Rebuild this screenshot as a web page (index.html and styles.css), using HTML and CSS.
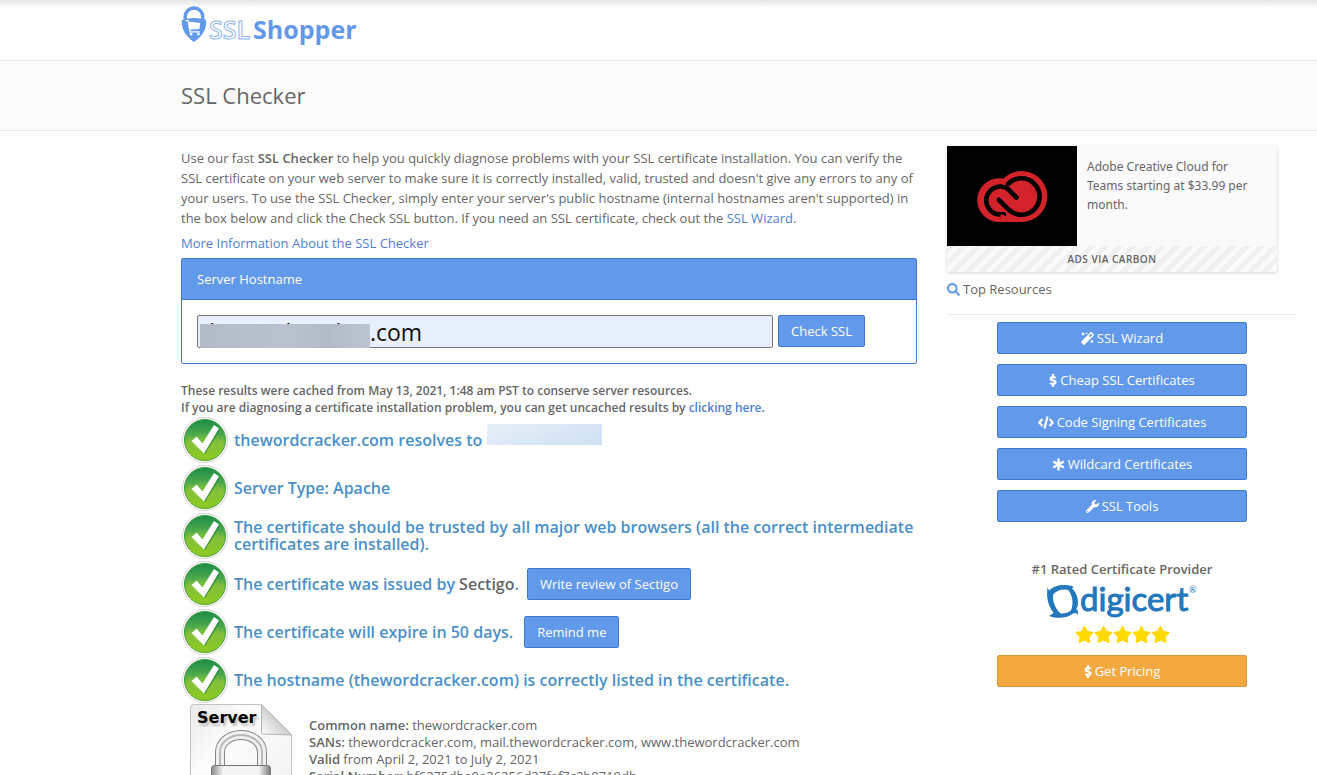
FILE: index.html
```html
<!DOCTYPE html>
<html lang="en">
<head>
<meta charset="utf-8">
<title>SSL Checker</title>
<link rel="stylesheet" href="styles.css">
</head>
<body>
<svg class="defs" aria-hidden="true">
  <defs>
    <linearGradient id="g-ball" x1="0" y1="0" x2="0" y2="1">
      <stop offset="0" stop-color="#1c8a45"/><stop offset=".35" stop-color="#4aa84e"/><stop offset=".55" stop-color="#7cbb35"/><stop offset="1" stop-color="#86c81c"/>
    </linearGradient>
    <linearGradient id="g-page" x1="0" y1="0" x2="1" y2="1">
      <stop offset="0" stop-color="#e9e9e9"/><stop offset=".3" stop-color="#fcfcfc"/><stop offset="1" stop-color="#f1f1f1"/>
    </linearGradient>
    <linearGradient id="g-fold" x1="0" y1="1" x2="1" y2="0">
      <stop offset="0" stop-color="#ffffff"/><stop offset=".5" stop-color="#cfcfcf"/><stop offset="1" stop-color="#f2f2f2"/>
    </linearGradient>
    <linearGradient id="g-lock" x1="0" y1="0" x2="1" y2="0">
      <stop offset="0" stop-color="#8a8a8a"/><stop offset=".2" stop-color="#f4f4f4"/><stop offset=".8" stop-color="#f4f4f4"/><stop offset="1" stop-color="#777"/>
    </linearGradient>
    <symbol id="tick" viewBox="0 0 48 48">
      <circle cx="24" cy="24" r="22.500" fill="#fff" stroke="#d2d2d2"/>
      <circle cx="24" cy="24" r="20.500" fill="url(#g-ball)" stroke="#3f9a3c"/>
      <path d="M4.500 26C10 20 18 18 24 18s14 2 19.500 8A19.500 19.500 0 0 1 4.500 26z" fill="#b5dc4a" opacity=".15"/>
      <path d="M12 25l5-4 5 7L33 10l6 4-15 24z" fill="#237a35" opacity=".7"/>
      <path d="M10.500 25l5.500-4.500 5.500 7L33 9l5 3.500-15 25z" fill="#fff"/>
    </symbol>
    <symbol id="star" viewBox="0 0 576 512"><path d="M259.300 17.800L194 150.200 47.900 171.500c-26.200 3.800-36.700 36.100-17.700 54.600l105.700 103-25 145.500c-4.500 26.300 23.200 46 46.400 33.700L288 439.600l130.700 68.700c23.200 12.200 50.900-7.400 46.400-33.700l-25-145.500 105.700-103c19-18.500 8.500-50.800-17.700-54.600L382 150.200 316.700 17.800c-11.700-23.600-45.600-23.900-57.400 0z"/></symbol>
    <symbol id="dollar" viewBox="0 0 288 512"><path d="M244 158c-18-24-54-36-96-36-54 0-96 22-96 62 0 44 40 56 92 68 54 13 98 28 98 74 0 42-42 66-98 66-46 0-82-14-106-44M144 0v122M144 390v122" fill="none" stroke="currentColor" stroke-width="88"/></symbol>
  </defs>
</svg>

<header class="topbar">
  <a class="logo" href="#" aria-label="SSL Shopper">
    <svg class="logo-mark" viewBox="0 0 26 38" aria-hidden="true">
      <path d="M4 14V11a9 9 0 0 1 18 0v3" fill="none" stroke="#6399ea" stroke-width="3.500"/>
      <path d="M.5 14.500Q13 10 25.500 14.500C26 24 22 31 13 37 4 31 0 24 .5 14.500z" fill="#6399ea"/>
      <path d="M4.500 15h2.500l2 11.500h10" fill="none" stroke="#fff" stroke-width="1.200"/>
      <path d="M7 16l12.500 1.500-1 6-10.500.8z" fill="#fff"/>
      <circle cx="10" cy="28.800" r="1.400" fill="#fff"/><circle cx="17.500" cy="28.800" r="1.400" fill="#fff"/>
    </svg>
    <span class="logo-ssl">SSL</span><span class="logo-shopper">Shopper</span>
  </a>
</header>

<div class="titlebar"><h1>SSL Checker</h1></div>

<div class="layout">
  <main class="main">
    <p class="intro">Use our fast <b>SSL Checker</b> to help you quickly diagnose problems with your SSL certificate installation. You can verify the SSL certificate on your web server to make sure it is correctly installed, valid, trusted and doesn't give any errors to any of your users. To use the SSL Checker, simply enter your server's public hostname (internal hostnames aren't supported) in the box below and click the Check SSL button. If you need an SSL certificate, check out the <a href="#">SSL Wizard</a>.</p>
    <p class="more"><a href="#">More Information About the SSL Checker</a></p>

    <form class="panel">
      <label class="panel-head" for="host">Server Hostname</label>
      <div class="panel-body">
        <div class="host-field">
          <input id="host" type="text" value="thewordcracker.com">
          <span class="mask"></span>
        </div>
        <button class="btn" type="button">Check SSL</button>
      </div>
    </form>

    <p class="cached">These results were cached from May 13, 2021, 1:48 am PST to conserve server resources.<br>If you are diagnosing a certificate installation problem, you can get uncached results by <a href="#">clicking here</a>.</p>

    <ul class="results">
      <li><svg class="tick"><use href="#tick"/></svg><span>thewordcracker.com resolves to</span><span class="ip-mask"></span></li>
      <li><svg class="tick"><use href="#tick"/></svg><span>Server Type: Apache</span></li>
      <li><svg class="tick"><use href="#tick"/></svg><span>The certificate should be trusted by all major web browsers (all the correct intermediate certificates are installed).</span></li>
      <li><svg class="tick"><use href="#tick"/></svg><span>The certificate was issued by <em>Sectigo</em>.</span><button class="btn row-btn" type="button">Write review of Sectigo</button></li>
      <li><svg class="tick"><use href="#tick"/></svg><span>The certificate will expire in 50 days.</span><button class="btn row-btn remind" type="button">Remind me</button></li>
      <li><svg class="tick"><use href="#tick"/></svg><span>The hostname (thewordcracker.com) is correctly listed in the certificate.</span></li>
    </ul>

    <section class="cert">
      <svg class="cert-pic" viewBox="0 0 108 128" role="img" aria-label="Server">
        <path d="M4.500.5h68l30 30v96h-101V3.500q0-3 3-3z" fill="url(#g-page)" stroke="#c4c4c4"/>
        <path d="M72.500.5v28q0 1 1 1.500l29 1z" fill="url(#g-fold)" stroke="#b5b5b5"/>
        <path d="M31 66V48a21 17 0 0 1 42 0v18" fill="none" stroke="#858585" stroke-width="10"/>
        <path d="M31 66V48a21 17 0 0 1 42 0v18" fill="none" stroke="#f0f0f0" stroke-width="8"/>
        <path d="M31 66V48a21 17 0 0 1 42 0v18" fill="none" stroke="#b9b9b9" stroke-width="2"/>
        <rect x="22.500" y="61.500" width="59" height="50" rx="3" fill="url(#g-lock)" stroke="#777"/>
        <text class="cert-shadow" x="10" y="22">Server</text>
        <text class="cert-label" x="8" y="19">Server</text>
      </svg>
      <p><b>Common name:</b> thewordcracker.com<br><b>SANs:</b> thewordcracker.com, mail.thewordcracker.com, www.thewordcracker.com<br><b>Valid</b> from April 2, 2021 to July 2, 2021<br><b>Serial Number:</b> bf6275dba0a26256d27fef7c2b8710db</p>
    </section>
  </main>

  <aside class="side">
    <div class="ad">
      <div class="ad-top">
        <div class="ad-pic">
          <svg class="cc" viewBox="110 88 212 160" aria-hidden="true">
            <path d="M176 245a66 66 0 0 1-1-132q8 0 14 1A77 77 0 1 1 243 245z" fill="#d2232a"/>
            <g fill="none" stroke="#000" stroke-width="14" stroke-linecap="round">
              <path d="M228 171l-26-26A42 42 0 1 0 176 222h14" />
              <path d="M175 178l31 31a55 55 0 1 0-3-79"/>
            </g>
            <path d="M180 222h8l10 9h-18z" fill="#d2232a"/>
          </svg>
        </div>
        <a class="ad-text" href="#">Adobe Creative Cloud for Teams starting at $33.99 per month.</a>
      </div>
      <a class="ad-via" href="#">ADS VIA CARBON</a>
    </div>

    <h2 class="side-title"><svg viewBox="0 0 512 512" aria-hidden="true"><path d="M505 442.700L405.300 343c-4.500-4.500-10.600-7-17-7H372c27.600-35.300 44-79.700 44-128C416 93.100 322.900 0 208 0S0 93.100 0 208s93.100 208 208 208c48.300 0 92.700-16.400 128-44v16.300c0 6.400 2.500 12.500 7 17l99.700 99.700c9.400 9.400 24.600 9.400 33.900 0l28.300-28.300c9.400-9.400 9.400-24.600.1-34zM208 336c-70.700 0-128-57.200-128-128 0-70.700 57.200-128 128-128 70.700 0 128 57.200 128 128 0 70.700-57.200 128-128 128z"/></svg>Top Resources</h2>

    <nav class="links">
      <a class="btn" href="#"><svg class="ic" viewBox="0 0 512 512" aria-hidden="true"><path d="M224 96l16-32 32-16-32-16-16-32-16 32-32 16 32 16 16 32zM80 160l26.660-53.330L160 80l-53.340-26.670L80 0 53.340 53.330 0 80l53.340 26.670L80 160zm352 128l-26.660 53.330L352 368l53.340 26.670L432 448l26.660-53.330L512 368l-53.340-26.670L432 288zm70.620-193.770L417.770 9.380C411.530 3.120 403.340 0 395.150 0c-8.190 0-16.380 3.120-22.630 9.380L9.380 372.520c-12.500 12.500-12.500 32.760 0 45.250l84.850 84.850c6.250 6.250 14.440 9.370 22.620 9.370 8.190 0 16.380-3.120 22.630-9.370l363.140-363.150c12.500-12.480 12.500-32.750 0-45.240zM359.450 203.460l-50.910-50.910 86.600-86.600 50.910 50.910-86.600 86.600z"/></svg>SSL Wizard</a>
      <a class="btn" href="#"><svg class="ic narrow" aria-hidden="true"><use href="#dollar"/></svg>Cheap SSL Certificates</a>
      <a class="btn" href="#"><svg class="ic wide" viewBox="0 0 640 512" aria-hidden="true"><path d="M180 120L50 256l130 136M460 120l130 136-130 136M380 20L260 492" fill="none" stroke="currentColor" stroke-width="88" stroke-linejoin="round"/></svg>Code Signing Certificates</a>
      <a class="btn" href="#"><svg class="ic" viewBox="0 0 512 512" aria-hidden="true"><path d="M256 16v480M50 137l412 238M462 137L50 375" fill="none" stroke="currentColor" stroke-width="96"/></svg>Wildcard Certificates</a>
      <a class="btn" href="#"><svg class="ic" viewBox="0 0 512 512" aria-hidden="true"><path d="M507.730 109.100c-2.240-9.030-13.540-12.090-20.120-5.510l-74.360 74.360-67.880-11.310-11.310-67.880 74.360-74.360c6.620-6.620 3.430-17.900-5.660-20.160-47.380-11.740-99.550.91-136.580 37.930-39.640 39.640-50.550 97.100-34.050 147.200L18.740 402.760c-24.990 24.990-24.990 65.510 0 90.500 24.990 24.990 65.510 24.990 90.500 0l213.210-213.210c50.120 16.710 107.470 5.680 147.370-34.220 37.070-37.070 49.700-89.320 37.910-136.730zM64 472c-13.250 0-24-10.750-24-24 0-13.260 10.750-24 24-24s24 10.740 24 24c0 13.250-10.750 24-24 24z"/></svg>SSL Tools</a>
    </nav>

    <div class="rated">
      <h3>#1 Rated Certificate Provider</h3>
      <svg class="digicert" viewBox="0 0 152 36" role="img" aria-label="digicert">
        <g fill="#2277bd" transform="translate(1 0) scale(.333) translate(-170 -87)">
          <path d="M176 108C192 90 222 86 250 95L240 106C220 100 202 104 186 120z"/>
          <path d="M236 92C258 108 266 130 262 154C256 166 248 172 238 176C251 152 250 125 232 102z"/>
          <path d="M176 183C200 192 228 190 246 177C255 172 261 174 263 181C266 166 258 158 248 163C232 177 210 179 194 171z"/>
          <path d="M172 96C166 128 174 162 202 187L216 181C194 162 184 138 190 112C180 112 174 106 172 96z"/>
        </g>
        <text class="digi-text" x="34" y="27">digicert</text>
        <text class="digi-r" x="143" y="9">®</text>
      </svg>
      <div class="stars"><svg><use href="#star"/></svg><svg><use href="#star"/></svg><svg><use href="#star"/></svg><svg><use href="#star"/></svg><svg><use href="#star"/></svg></div>
      <a class="btn pricing" href="#"><svg class="ic narrow" aria-hidden="true"><use href="#dollar"/></svg>Get Pricing</a>
    </div>
  </aside>
</div>
</body>
</html>
```
FILE: styles.css
```css
* { box-sizing: border-box; }
html { height: 100%; overflow: hidden; }
body {
  margin: 0;
  height: 100%;
  overflow: hidden;
  background: #fff;
  color: #666;
  font: 13px/20px "Open Sans", "Noto Sans", sans-serif;
}
p, h1, h2, h3, ul { margin: 0; padding: 0; font-weight: 400; }
b { font-weight: 600; }
a { color: #4f7fd0; text-decoration: none; }
.defs { position: absolute; width: 0; height: 0; }

.topbar {
  height: 60px;
  padding: 6px 20px 0 181px;
  background: linear-gradient(#e4e4e4, #fff 8px);
}
.logo { display: inline-flex; align-items: flex-start; color: #6399ea; font-size: 25px; line-height: 34px; }
.logo-mark { width: 26px; height: 37px; margin-right: 2px; }
.logo-ssl, .logo-shopper { padding-top: 6px; font-weight: 700; }
.logo-ssl { margin-right: 3px; font-weight: 600; color: #fff; -webkit-text-stroke: 1px #8db5f0; }

.titlebar {
  padding: 18px 20px 19px 181px;
  border-top: 1px solid #e9e9e9;
  border-bottom: 1px solid #e9e9e9;
  background: #fbfbfb;
}
h1 { font-size: 22px; line-height: 32px; }

.layout { display: flex; gap: 30px; padding: 15px 20px 0 181px; }
.main { flex: 1; min-width: 0; padding-top: 2px; }
.side { width: 350px; flex: none; }
.more { margin: 5px 0; }

.panel { border: 1px solid #3f7ad2; border-radius: 2px; }
.panel-head { display: block; padding: 10px 15px; border-bottom: 1px solid #3f7ad2; background: #6399ea; color: #fff; }
.panel-body { display: flex; align-items: flex-start; gap: 5px; padding: 15px; }
.host-field { position: relative; width: 576px; }
.host-field input {
  display: block;
  width: 100%;
  height: 33px;
  padding: 0 3px;
  border: 1px solid #767676;
  border-radius: 2px;
  background: #e8f0fe;
  color: #111;
  font: 23px "Open Sans", "Noto Sans", sans-serif;
}
.mask { position: absolute; left: 3px; top: 9px; width: 170px; height: 24px; background: linear-gradient(90deg, #b3bbc8, #b9c1d0 50%, #b3bac7 75%, #bcc4d3); }

.btn {
  display: inline-flex;
  align-items: center;
  justify-content: center;
  height: 32px;
  padding: 0 12px;
  border: 1px solid #3f7ad2;
  border-radius: 2px;
  background: #6399ea;
  color: #fff;
  font: 13px/20px "Open Sans", "Noto Sans", sans-serif;
  white-space: nowrap;
}

.cached { margin-top: 18px; font-size: 12px; line-height: 17px; font-weight: 600; }
.results { list-style: none; color: #4a90c8; font-size: 16px; line-height: 17px; font-weight: 600; }
.results li { display: flex; align-items: center; height: 48px; }
.results em { color: #666; font-style: normal; }
.tick { width: 48px; height: 48px; margin-right: 5px; flex: none; }
.ip-mask { align-self: flex-start; width: 115px; height: 21px; margin: 8px 0 0 5px; background: linear-gradient(160deg, #e6eff8, #cfe1f3); }
.row-btn { margin-left: 8px; }
.remind { margin-left: 11px; }

.cert { display: flex; font-size: 13px; line-height: 17px; }
.cert-pic { width: 108px; height: 128px; margin: 0 12px 0 8px; flex: none; }
.cert p { padding-top: 13px; }
.cert-label, .cert-shadow { font: 700 16px "DejaVu Sans", "Liberation Sans", sans-serif; }
.cert-label { fill: #000; }
.cert-shadow { fill: #bbb; filter: blur(1px); }

.ad { width: 330px; box-shadow: 0 1px 3px rgba(0, 0, 0, .18); background: #fafafa; }
.ad-top { display: flex; }
.ad-pic { display: flex; align-items: center; justify-content: center; width: 130px; height: 100px; background: #000; }
.cc { width: 71px; height: 53px; }
.ad-text { flex: 1; padding: 11px 20px 0 10px; color: #666; font: 12px/19px "Noto Sans", sans-serif; }
.ad-via {
  display: block;
  background: repeating-linear-gradient(135deg, #f0f0f1 0 5px, #fafafa 5px 10px);
  color: #666;
  font-size: 10px;
  font-weight: 600;
  line-height: 26px;
  letter-spacing: .05em;
  text-align: center;
}
.side-title { display: flex; align-items: center; gap: 3px; margin-top: 7px; padding-bottom: 15px; border-bottom: 1px solid #e9e9e9; font-size: 13px; line-height: 20px; }
.side-title svg { width: 13px; height: 13px; fill: #6399ea; }
.links { display: flex; flex-direction: column; gap: 10px; width: 250px; margin: 7px auto 0; }
.ic { width: 13px; height: 13px; margin-right: 3px; fill: currentColor; }
.ic.narrow { width: 8px; }
.ic.wide { width: 16px; }

.rated { display: flex; flex-direction: column; align-items: center; width: 250px; margin: 37px auto 0; }
h3 { font-size: 13px; line-height: 20px; font-weight: 600; }
.digicert { width: 152px; height: 36px; margin-top: 5px; overflow: visible; }
.digi-text { font: 400 33px Lato, sans-serif; fill: #2277bd; stroke: #2277bd; stroke-width: 1px; }
.digi-r { font: 9px Lato, sans-serif; fill: #2277bd; }
.stars { display: flex; margin: 6px 0 12px; }
.stars svg { width: 19px; height: 17px; fill: #ffd900; }
.pricing { width: 100%; border-color: #d9963a; background: #f4a940; }
```
